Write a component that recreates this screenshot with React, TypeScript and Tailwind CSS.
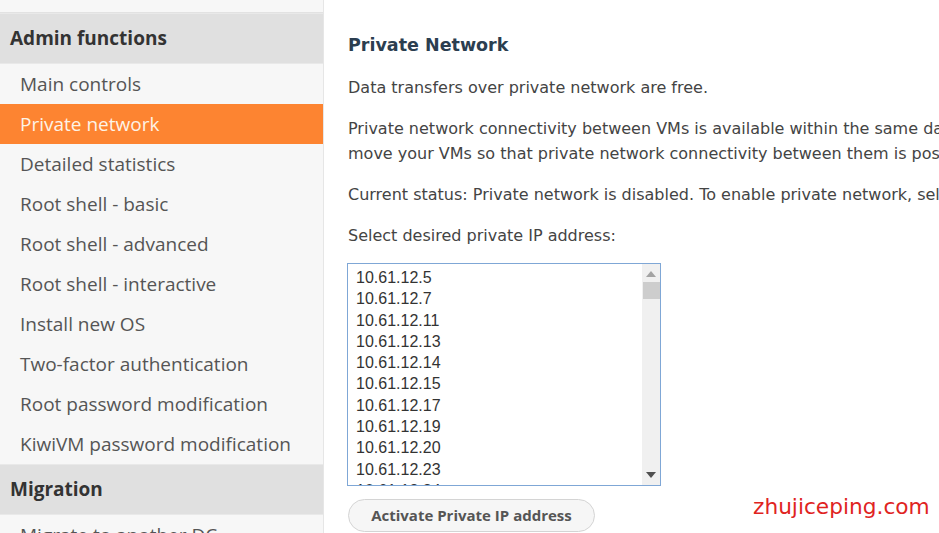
const sections = [
  {
    title: 'Admin functions',
    items: [
      'Main controls',
      'Private network',
      'Detailed statistics',
      'Root shell - basic',
      'Root shell - advanced',
      'Root shell - interactive',
      'Install new OS',
      'Two-factor authentication',
      'Root password modification',
      'KiwiVM password modification',
    ],
  },
  {
    title: 'Migration',
    items: ['Migrate to another DC'],
  },
];

const ips = [
  '10.61.12.5',
  '10.61.12.7',
  '10.61.12.11',
  '10.61.12.13',
  '10.61.12.14',
  '10.61.12.15',
  '10.61.12.17',
  '10.61.12.19',
  '10.61.12.20',
  '10.61.12.23',
  '10.61.12.24',
];

function Sidebar() {
  return (
    <aside className="w-[324px] shrink-0 bg-[#f7f7f7] border-r border-[#e6e6e6] font-['Open_Sans',sans-serif]">
      <div className="h-[13px] border-b border-[#e2e2e2]" />
      {sections.map((s) => (
        <div key={s.title}>
          <div className="h-[51px] flex items-center px-[10px] bg-[#e0e0e0] border-y border-[#e9e9e9] text-[19px] font-bold text-[#333]">
            {s.title}
          </div>
          {s.items.map((item) => {
            const active = item === 'Private network';
            return (
              <div
                key={item}
                className={
                  active
                    ? 'h-[40px] flex items-center px-[20px] text-[19px] bg-[#fd8431] text-[#fdf3e6]'
                    : 'h-[40px] flex items-center px-[20px] text-[19px] text-[#555]'
                }
              >
                {item}
              </div>
            );
          })}
        </div>
      ))}
    </aside>
  );
}

function IpList() {
  return (
    <div className="relative -ml-[1px] w-[314px] h-[223px] border border-[#7fa7d6] bg-white overflow-hidden">
      <div className="h-full overflow-hidden pl-[8px] pt-[3px] font-['Liberation_Sans',Arial,sans-serif] text-[16px] leading-[21.3px] text-[#333]">
        {ips.map((ip) => (
          <div key={ip}>{ip}</div>
        ))}
      </div>
      <div className="absolute right-0 top-0 bottom-0 w-[18px] bg-[#f0f0f0] flex flex-col items-center">
        <svg width="10" height="6" viewBox="0 0 10 6" className="mt-[7px]">
          <path d="M0 6 L5 0 L10 6 Z" fill="#a3a3a3" />
        </svg>
        <div className="mt-[5px] w-[17px] h-[17px] bg-[#cdcdcd]" />
        <div className="flex-1" />
        <svg width="10" height="6" viewBox="0 0 10 6" className="mb-[7px]">
          <path d="M0 0 L10 0 L5 6 Z" fill="#505050" />
        </svg>
      </div>
    </div>
  );
}

export default function App() {
  return (
    <div className="relative w-[939px] h-[533px] overflow-hidden bg-white flex">
      <Sidebar />
      <main className="flex-1 pl-[24px] pt-[33px] font-['DejaVu_Sans',Verdana,sans-serif] text-[16px] leading-[25px] text-[#444] whitespace-nowrap overflow-hidden">
        <h2 className="text-[17.5px] font-bold text-[#2b3e50] mb-[17px]">Private Network</h2>
        <p className="mb-[16px]">Data transfers over private network are free.</p>
        <p className="mb-[16px]">
          Private network connectivity between VMs is available within the same datacenter. If needed, you can
          <br />
          move your VMs so that private network connectivity between them is possible.
        </p>
        <p className="mb-[16px]">
          Current status: Private network is disabled. To enable private network, select an IP address below.
        </p>
        <p className="mb-[15px]">Select desired private IP address:</p>
        <IpList />
        <button className="mt-[13px] w-[247px] h-[33px] rounded-full border border-[#d4d4d4] bg-[#f6f6f6] font-['Open_Sans',sans-serif] text-[15px] font-bold text-[#555]">
          Activate Private IP address
        </button>
      </main>
      <div className="absolute left-[753px] top-[491px] font-['DejaVu_Sans',sans-serif] text-[21.7px] text-[#e0241f]">
        zhujiceping.com
      </div>
    </div>
  );
}
